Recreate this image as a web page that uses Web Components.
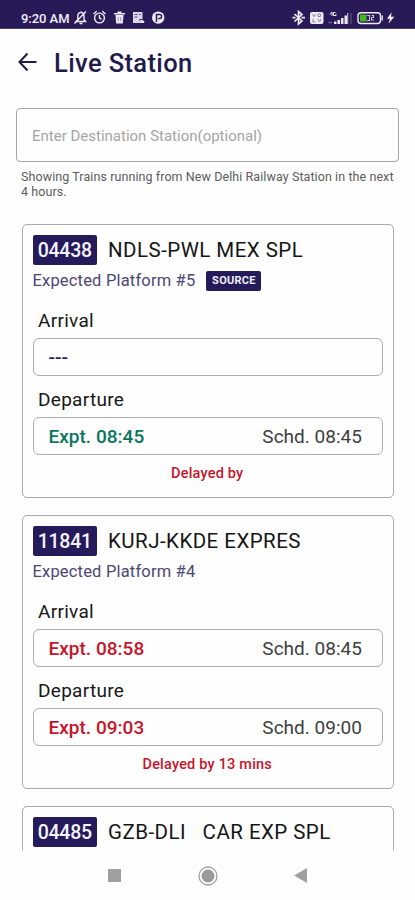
<!DOCTYPE html>
<html lang="en">
<head>
<meta charset="utf-8">
<title>Live Station</title>
<style>
html,body{margin:0;height:100%;background:#fefefe}
body{font-family:Roboto,"Liberation Sans",sans-serif;overflow:hidden}
</style>
</head>
<body>
<live-station></live-station>
<script>
const define = (name, html, setup) => {
  const t = document.createElement('template');
  t.innerHTML = html;
  customElements.define(name, class extends HTMLElement {
    constructor() {
      super();
      this.attachShadow({mode: 'open'}).append(t.content.cloneNode(true));
    }
    connectedCallback() { if (setup) setup(this, this.shadowRoot); }
  });
};

define('status-bar', `
<style>
:host{display:flex;align-items:flex-end;box-sizing:border-box;height:29px;padding:0 18px 2px 21px;background:#291a57;color:#f1eef8;border-bottom:1px solid #4b3f70}
span{font-size:13px;font-weight:500;line-height:14px;width:50px;white-space:nowrap;letter-spacing:-.05px}
svg{display:block;flex:none}
.gap{flex:1}
</style>
<span>9:20 AM</span>
<svg width="94" height="16" viewBox="71 11 94 16" fill="none" stroke="#eeeaf6" stroke-width="1.4">
  <path d="M76 22.500h9.500l-1.500-2v-3.500c0-2-1-3.500-3-3.800c-2 .3-3.200 1.800-3.200 3.800v3.500zM79.500 24.500h3M74.500 24.500L86 12.500"/>
  <circle cx="99.500" cy="19" r="4.900"/><path d="M99.500 16v3.200l2 1.200M93.500 15l3.200-2.700M105.500 15l-3.200-2.700"/>
  <path d="M115.500 16h8l-.7 8.500h-6.600z" fill="#eeeaf6" stroke="none"/><path d="M114 14.700h11M117.500 13.200h4"/><path d="M118.300 18v4.500M120.800 18v4.500" stroke="#8980a5" stroke-width=".8"/>
  <path d="M133 13h9.500v7h-3v4H133z" fill="#dcd7e8" stroke="none"/><path d="M134.500 15.500h3M134.500 18h3M139 15.500h2" stroke="#5d5281" stroke-width="1"/><path d="M139.500 23.500c0-3 4.500-3 4.500 0z" fill="#dcd7e8" stroke-width="1"/>
  <circle cx="158.200" cy="18.600" r="6.200" fill="#eeeaf6" stroke="none"/><path d="M156.500 23v-7.500h3.200c2.500 0 2.500 4 0 4h-1.500" stroke="#291a57" stroke-width="1.500"/>
</svg>
<div class="gap"></div>
<svg width="105" height="16" viewBox="292 11 105 16" fill="none" stroke="#eeeaf6" stroke-width="1.400">
  <path d="M294.500 15l7.500 7-3.500 3V12.500l3.500 3-7.500 7M292.500 18.700h3M301.500 18.700h3.500" stroke-width="1.700"/>
  <rect x="310" y="13" width="13.500" height="12" rx="2" fill="#eeeaf6" stroke="none"/>
  <path d="M312.500 15l1.500 2.800 1.500-2.800M318 15h2.500v2.500H318zM313 20v3h2.500M318 20l1.500 3 1.500-3" stroke="#8d84a5" stroke-width="1"/>
  <path d="M330 15.500l2-2.500v4M335.500 13.500h-2v3h2.500v-1.500" stroke-width="1"/>
  <path d="M328.500 23.500h3.500" stroke="#71668f"/>
  <path d="M334 22.500h2.500V25H334zM337.500 21h2.500v4h-2.500zM341 19h2.500v6H341zM344.500 16.500h2.500V25h-2.500z" fill="#eeeaf6" stroke="none"/><path d="M347.700 14v11" stroke="#d5d0e0" stroke-width="1"/><path d="M351 14v11" stroke="#655a86" stroke-width="1"/>
  <rect x="358" y="13.700" width="22.500" height="10.800" rx="3"/><path d="M382.200 16.500v5"/>
  <path d="M360 15.500h6.500v7H360z" fill="#43b71d" stroke="none"/><path d="M367 16.500h2.500v5H367M371.500 16.500h2v2h-2v2.500h2.500" stroke="#c8c2d6" stroke-width="1.100"/>
  <path d="M391.500 13.300l-4.500 6.500h3l-1.500 5 5.800-7h-3.300z" fill="#f4f1fa" stroke="none"/>
</svg>`);

define('app-header', `
<style>
:host{display:flex;align-items:center;box-sizing:border-box;height:66px;padding:1px 0 0 17.500px;color:#211a4d}
svg{flex:none;margin-right:17.500px;margin-top:-2px}
h1{margin:0;padding-top:1px;font-size:25.500px;font-weight:500;line-height:30px;letter-spacing:.38px;white-space:nowrap}
</style>
<svg width="19" height="20" viewBox="0 0 19 20" fill="none" stroke="#211a45" stroke-width="2"><path d="M9.500 1.500L1.500 10l8 8.500M1.500 10H18.500"/></svg>
<h1><slot></slot></h1>`);

define('station-input', `
<style>
:host{display:flex;align-items:center;box-sizing:border-box;margin:13px 16px 0;height:54px;border:1px solid #a6a6a6;border-radius:4px;padding:1px 15px 0;font-size:15px;color:#a5a5a5;letter-spacing:0;white-space:nowrap}
</style><slot></slot>`);

define('station-note', `
<style>
:host{display:block;margin:8px 0 0 21px;font-size:12.500px;line-height:14.500px;color:#5c5c5c;letter-spacing:.08px;white-space:nowrap}
</style><slot></slot>`);

define('time-field', `
<style>
:host{display:block}
label{display:block;padding-left:5.500px;font-size:19px;line-height:24px;color:#171717;letter-spacing:.3px}
.box{display:flex;justify-content:space-between;align-items:center;box-sizing:border-box;height:38px;margin-top:5px;padding:0 20px 0 15px;border:1px solid #adadad;border-radius:6px;font-size:19px;letter-spacing:.02px;white-space:nowrap}
.e{font-weight:500;color:#241c60}
:host([tone=late]) .e{color:#c5152a}
:host([tone=ontime]) .e{color:#0b7560}
.s{color:#404040}
</style>
<label></label>
<div class="box"><span class="e"></span><span class="s"></span></div>`,
(el, r) => {
  r.querySelector('label').textContent = el.getAttribute('label');
  r.querySelector('.e').textContent = el.getAttribute('expected');
  r.querySelector('.s').textContent = el.getAttribute('scheduled') || '';
});

define('train-card', `
<style>
:host{display:block;box-sizing:border-box;flex:none;height:274px;border:1px solid #aaa;border-radius:5px;padding:10px 10px 0 9.500px}
.top{display:flex;align-items:center;height:30px}
.num{display:flex;align-items:center;justify-content:center;box-sizing:border-box;width:64.500px;height:30px;margin-right:11px;padding-top:1px;border-radius:2px;background:#251a5a;color:#f4f2fa;font-size:19.500px;font-weight:500;letter-spacing:-.3px}
.name{font-size:20.500px;color:#151515;white-space:pre;letter-spacing:.46px}
.sub{display:flex;align-items:center;height:31px;font-size:16.500px;color:#4d4774;letter-spacing:.18px;white-space:nowrap}
::slotted(source-chip){margin-left:11px}
.times{display:grid;gap:12px;margin-top:13px}
.delay{text-align:center;margin-top:10px;padding-right:1px;font-size:14.500px;line-height:18px;font-weight:500;color:#c5152a;letter-spacing:.2px}
</style>
<div class="top"><span class="num"></span><span class="name"></span></div>
<div class="sub"><span class="plat"></span><slot name="chip"></slot></div>
<div class="times"><slot></slot></div>
<div class="delay"></div>`,
(el, r) => {
  for (const [k, c] of [['number', '.num'], ['name', '.name'], ['platform', '.plat'], ['delay', '.delay']])
    r.querySelector(c).textContent = el.getAttribute(k) || '';
});

define('source-chip', `
<style>
:host{display:flex;align-items:center;justify-content:center;width:55px;height:20px;border-radius:2px;background:#251a5a;color:#f2f0f8;font-size:11px;font-weight:700;letter-spacing:.25px}
</style><slot></slot>`);

define('nav-bar', `
<style>
:host{display:flex;justify-content:space-between;align-items:center;box-sizing:border-box;height:50px;padding:1px 108px 0;background:#fefefe}
svg{display:block}
</style>
<svg width="13" height="13"><path d="M0 0h13v13H0z" fill="#a0a0a0"/></svg>
<svg width="20" height="20"><circle cx="10" cy="10" r="9" fill="none" stroke="#a0a0a0" stroke-width="1.300"/><circle cx="10" cy="10" r="6.500" fill="#9b9b9b"/></svg>
<svg width="13" height="15"><path d="M0 7.500L13 0v15z" fill="#a0a0a0"/></svg>`);

define('live-station', `
<style>
:host{display:flex;flex-direction:column;width:415px;height:900px;overflow:hidden}
main{flex:1;min-height:0;overflow:hidden}
.list{display:flex;flex-direction:column;gap:17px;margin:25px 21px 0 22px}
</style>
<status-bar></status-bar>
<main>
<app-header>Live Station</app-header>
<station-input>Enter Destination Station(optional)</station-input>
<station-note>Showing Trains running from New Delhi Railway Station in the next<br>4 hours.</station-note>
<div class="list">
<train-card number="04438" name="NDLS-PWL MEX SPL" platform="Expected Platform #5" delay="Delayed by">
<source-chip slot="chip">SOURCE</source-chip>
<time-field label="Arrival" expected="---"></time-field>
<time-field label="Departure" tone="ontime" expected="Expt. 08:45" scheduled="Schd. 08:45"></time-field>
</train-card>
<train-card number="11841" name="KURJ-KKDE EXPRES" platform="Expected Platform #4" delay="Delayed by 13 mins">
<time-field label="Arrival" tone="late" expected="Expt. 08:58" scheduled="Schd. 08:45"></time-field>
<time-field label="Departure" tone="late" expected="Expt. 09:03" scheduled="Schd. 09:00"></time-field>
</train-card>
<train-card number="04485" name="GZB-DLI   CAR EXP SPL"></train-card>
</div>
</main>
<nav-bar></nav-bar>`);
</script>
</body>
</html>
